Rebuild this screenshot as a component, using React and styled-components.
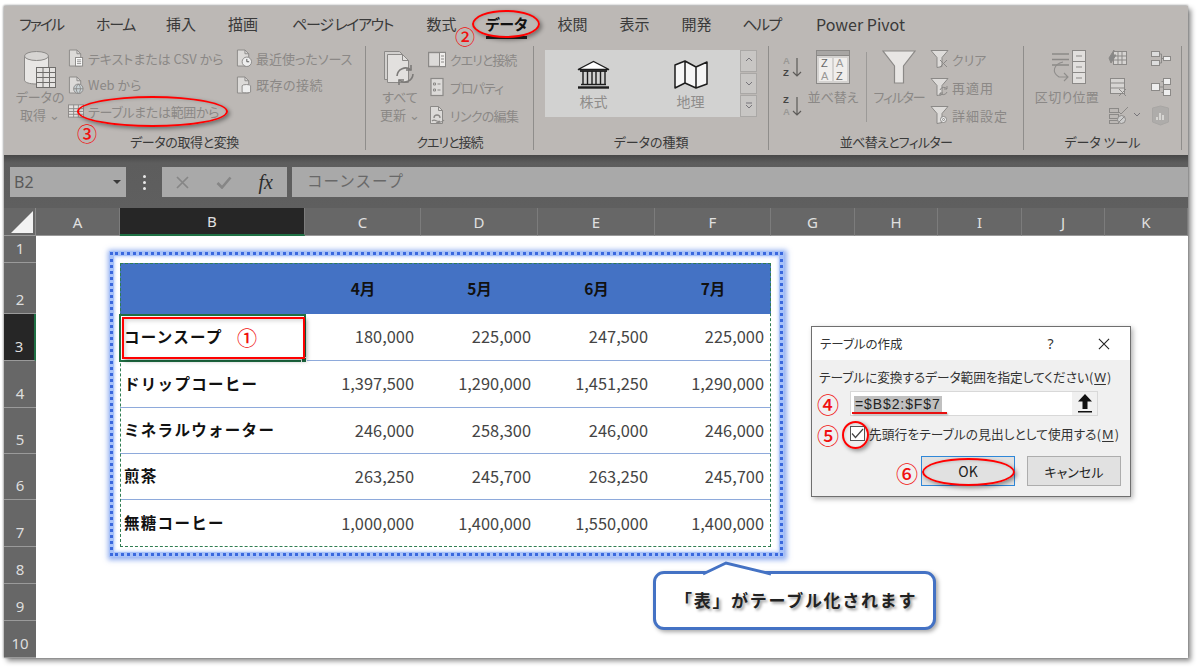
import React from 'react';
import styled, { createGlobalStyle } from 'styled-components';

const JP = '"Noto Sans CJK JP", "Noto Sans", sans-serif';
const LINE = '#8b8987';

const Global = createGlobalStyle`
  html, body { margin: 0; padding: 0; background: #fff; }
  body { font-family: ${JP}; font-feature-settings: "palt"; overflow: hidden; }
`;

const Root = styled.div`
  position: relative;
  width: 1200px;
  height: 669px;
  padding: 6px 0 0 4px;
  box-sizing: border-box;
  overflow: hidden;
`;
const Win = styled.div`
  width: 1184px;
  height: 652px;
  display: flex;
  flex-direction: column;
  background: #fff;
  box-shadow: 3px 3px 5px rgba(0,0,0,.45), 0 -1px 2px rgba(0,0,0,.25), -1px 0 2px rgba(0,0,0,.2);
`;
const Ribbon = styled.div`
  height: 149px;
  background: #bcb8b5;
  display: flex;
  flex-direction: column;
`;
const Tabs = styled.div`
  height: 40px;
  display: flex;
  padding-left: 15px;
  align-items: center;
`;
const Tab = styled.div`
  width: ${p => p.$w}px;
  margin-right: ${p => p.$gap}px;
  display: flex;
  justify-content: center;
  flex: none;
  font-size: ${p => p.$fs || 15}px;
  letter-spacing: ${p => p.$ls || 0}px;
  line-height: 34px;
  height: 38px;
  white-space: nowrap;
  color: ${p => (p.$on ? '#111' : '#3a3a3a')};
  font-weight: ${p => (p.$on ? 700 : 400)};
  box-sizing: border-box;
  position: relative;
  &::after {
    content: '';
    display: ${p => (p.$on ? 'block' : 'none')};
    position: absolute;
    left: 0; right: 0; bottom: 6px;
    height: 3px;
    background: #222;
  }
`;
const Groups = styled.div`
  display: flex;
  height: 104px;
`;
const Group = styled.div`
  width: ${p => p.$w}px;
  box-sizing: border-box;
  border-right: ${p => (p.$end ? 'none' : '1px solid #8f8d8b')};
  display: flex;
  flex-direction: column;
`;
const Content = styled.div`
  height: 88px;
  display: flex;
  padding-left: ${p => p.$pl || 0}px;
`;
const GroupLabel = styled.div`
  height: 16px;
  line-height: 16px;
  font-size: 13px;
  letter-spacing: ${p => p.$ls || 0}px;
  text-align: center;
  color: #3a3a3a;
`;
const Large = styled.div`
  width: ${p => p.$w}px;
  padding-top: 4px;
  display: flex;
  flex-direction: column;
  align-items: center;
  flex: none;
`;
const LargeIcon = styled.div`
  height: 38px;
  display: flex;
  align-items: flex-start;
  justify-content: center;
`;
const LargeText = styled.div`
  font-size: 13px;
  letter-spacing: ${p => p.$ls || 0}px;
  line-height: 18px;
  color: #8b8886;
  text-align: center;
  white-space: nowrap;
`;
const SmallCol = styled.div`
  width: ${p => p.$w}px;
  margin-left: ${p => p.$ml || 0}px;
  flex: none;
  display: flex;
  flex-direction: column;
`;
const SmallRow = styled.div`
  height: ${p => p.$h || 26.5}px;
  display: flex;
  align-items: center;
  box-sizing: border-box;
  padding-bottom: 2px;
  gap: ${p => p.$gap ?? 4}px;
  font-size: 13px;
  letter-spacing: ${p => p.$ls || 0}px;
  color: #8b8886;
  white-space: nowrap;
`;
const IconSlot = styled.span`
  width: ${p => p.$w || 16}px;
  display: flex;
  justify-content: center;
  flex: none;
`;
const Gallery = styled.div`
  margin: 4px 0 0 11px;
  width: 212px;
  height: 67px;
  display: flex;
  background: #d2d2d1;
  box-sizing: border-box;
`;
const GalleryItem = styled.div`
  width: ${p => p.$w}px;
  display: flex;
  flex-direction: column;
  align-items: center;
  gap: 2px;
  padding-top: 10px;
  box-sizing: border-box;
  font-size: 14px;
  line-height: 20px;
  color: #8f8d8b;
`;
const GalleryMain = styled.div`
  flex: 1;
  display: flex;
`;
const Scroller = styled.div`
  width: 17px;
  display: flex;
  flex-direction: column;
  background: #bcb8b5;
  gap: 1px;
  box-sizing: border-box;
`;
const ScrollBtn = styled.div`
  flex: 1;
  background: #c8c6c4;
  border: 1px solid #aaa8a6;
  display: flex;
  align-items: center;
  justify-content: center;
`;
const InnerSep = styled.div`
  width: 1px;
  height: 70px;
  margin: 6px 15px 0 16px;
  background: #9c9a98;
  flex: none;
`;
const FormulaBar = styled.div`
  height: 53px;
  flex: none;
  background: linear-gradient(#474747 0, #5d5d5d 8px, #5f5f5f 100%);
  display: flex;
  padding: 12px 0 11px 6px;
  box-sizing: border-box;
`;
const NameBox = styled.div`
  width: 116px;
  background: #a9a9a9;
  color: #5a5a5a;
  font-family: "Noto Sans", sans-serif;
  font-size: 16px;
  line-height: 30px;
  padding-left: 4px;
  box-sizing: border-box;
  display: flex;
  justify-content: space-between;
  align-items: center;
  padding-right: 5px;
`;
const Caret = styled.span`
  width: 0;
  height: 0;
  border-left: 4px solid transparent;
  border-right: 4px solid transparent;
  border-top: 4px solid #3a3a3a;
`;
const Dots = styled.div`
  width: 36px;
  display: flex;
  flex-direction: column;
  align-items: center;
  justify-content: center;
  gap: 3px;
  span { width: 3px; height: 3px; background: #e8e8e8; border-radius: 50%; }
`;
const FxBox = styled.div`
  width: 125px;
  background: #a9a9a9;
  display: flex;
  align-items: center;
  justify-content: space-between;
  padding: 0 14px 0 14px;
  box-sizing: border-box;
`;
const Fx = styled.span`
  font-family: "Liberation Serif", serif;
  font-style: italic;
  font-size: 20px;
  color: #2c2c2c;
`;
const FormulaText = styled.div`
  flex: 1;
  margin-left: 5px;
  background: #a9a9a9;
  color: #686868;
  font-size: 15.5px;
  line-height: 27px;
  padding-left: 15px;
  letter-spacing: 1px;
  font-feature-settings: normal;
`;
const Sheet = styled.div`
  flex: 1;
  display: grid;
  grid-template-columns: 32px 84px 185px 116px 117px 117px 116px 84px 83px 84px 83px 83px;
  grid-template-rows: 28px 27px 51px 47px 47px 46px 46px 47px 37px 37px 37px;
`;
const Corner = styled.div`
  background: #676767;
  border-right: 1px solid #8a8a8a;
  border-bottom: 1px solid #999;
  box-sizing: border-box;
  position: relative;
  &::after {
    content: '';
    position: absolute;
    right: 2px;
    bottom: 2px;
    border-style: solid;
    border-width: 0 0 22px 22px;
    border-color: transparent transparent #f2f2f2 transparent;
  }
`;
const ColHead = styled.div`
  background: ${p => (p.$on ? '#262626' : '#676767')};
  color: #e0e0e0;
  font-family: "Noto Sans", sans-serif;
  font-size: 15px;
  display: flex;
  align-items: center;
  justify-content: center;
  box-sizing: border-box;
  border-right: 1px solid #7c7c7c;
  border-bottom: ${p => (p.$on ? '2px solid #1f7145' : '1px solid #999')};
`;
const RowHead = styled.div`
  background: ${p => (p.$on ? '#262626' : '#676767')};
  color: #dedede;
  font-family: "Noto Sans", sans-serif;
  font-size: 15px;
  line-height: 20px;
  display: flex;
  align-items: flex-end;
  justify-content: center;
  padding-bottom: 4px;
  box-sizing: border-box;
  border-bottom: 1px solid #9a9a9a;
  border-right: ${p => (p.$on ? '2px solid #1f7145' : 'none')};
`;
const Cell = styled.div`
  background: ${p => (p.$blue ? '#4472c4' : '#fff')};
  display: flex;
  align-items: center;
  box-sizing: border-box;
  white-space: nowrap;
  font-size: 16.4px;
  color: #444;
  padding-bottom: 2px;
  border-bottom: ${p => (p.$line ? '1px solid #8eaadb' : 'none')};
`;
const Name = styled(Cell)`
  color: #111;
  font-weight: 700;
  font-size: 15.5px;
  padding-left: 4px;
  padding-bottom: 3px;
  letter-spacing: 1.3px;
  font-feature-settings: normal;
`;
const Num = styled(Cell)`
  justify-content: flex-end;
  padding-right: 7px;
  font-feature-settings: normal;
`;
const Month = styled(Cell)`
  justify-content: center;
  color: #111;
  font-weight: 700;
  font-size: 15.5px;
  font-feature-settings: normal;
`;
const Marquee = styled.div`
  position: absolute;
  left: 109px;
  top: 251px;
  width: 675px;
  height: 306px;
  box-sizing: border-box;
  border: 5px solid #a8c2f9;
  box-shadow: 1px 1px 5px 2px rgba(120,155,235,.8), inset 0 0 3px 1px #c4d5fb;
  &::after {
    content: '';
    position: absolute;
    inset: -4px;
    border: 3px dotted #3a68de;
  }
`;
const Dashed = styled.div`
  position: absolute;
  left: 120px;
  top: 263px;
  width: 651px;
  height: 284px;
  box-sizing: border-box;
  border: 1px dashed #2f7d52;
`;
const Active = styled.div`
  position: absolute;
  left: 119px;
  top: 314px;
  width: 187px;
  height: 48px;
  box-sizing: border-box;
  border: 2px solid #1f7145;
  &::after {
    content: '';
    position: absolute;
    right: -3px;
    bottom: -3px;
    width: 6px;
    height: 6px;
    background: #1f7145;
    border: 1px solid #fff;
    box-sizing: border-box;
  }
`;
const RedBox = styled.div`
  position: absolute;
  left: 122px;
  top: 317px;
  width: 183px;
  height: 42px;
  box-sizing: border-box;
  border: 2.5px solid #f00;
  box-shadow: 2px 2px 4px rgba(0,0,0,.35), inset 2px 2px 4px rgba(0,0,0,.15);
`;
const Ring = styled.div`
  position: absolute;
  left: ${p => p.$x}px;
  top: ${p => p.$y}px;
  width: ${p => p.$w}px;
  height: ${p => p.$h}px;
  box-sizing: border-box;
  border: 2.5px solid #f00;
  border-radius: 50%;
  box-shadow: 2px 2px 4px rgba(0,0,0,.4), inset 1px 1px 3px rgba(0,0,0,.12);
`;
const Mark = styled.div`
  position: absolute;
  left: ${p => p.$x}px;
  top: ${p => p.$y}px;
  width: 26px;
  height: 26px;
  margin: -13px 0 0 -13px;
  text-align: center;
  line-height: 26px;
  font-size: ${p => p.$s || 20}px;
  font-weight: 500;
  color: #f01010;
  font-feature-settings: normal;
`;
const Dialog = styled.div`
  position: absolute;
  left: 811px;
  top: 326px;
  width: 320px;
  height: 171px;
  box-sizing: border-box;
  border: 1.5px solid #6f6f6f;
  background: #f0f0f0;
  box-shadow: 2px 2px 5px rgba(0,0,0,.3);
  display: flex;
  flex-direction: column;
`;
const DialogTitle = styled.div`
  height: 33px;
  flex: none;
  background: #fff;
  display: flex;
  align-items: center;
  font-size: 12.5px;
  color: #333;
  padding-left: 8px;
`;
const TitleText = styled.span`
  flex: 1;
`;
const TitleBtn = styled.span`
  width: 53px;
  display: flex;
  justify-content: center;
  font-family: "Noto Sans", sans-serif;
  font-size: 14px;
`;
const DialogBody = styled.div`
  padding: 7px 8px 0 7px;
  display: flex;
  flex-direction: column;
  font-size: 12.7px;
  color: #333;
  flex: 1;
`;
const Prompt = styled.div`
  line-height: 20px;
  white-space: nowrap;
  letter-spacing: -.05px;
`;
const Key = styled.u`
  font-family: "Noto Sans", sans-serif;
  text-underline-offset: 2px;
  margin: 0 1px;
`;
const InputRow = styled.div`
  margin: 4px 0 0 31px;
  width: 248px;
  height: 25px;
  background: #fff;
  border: 1px solid #d8d8d8;
  box-sizing: border-box;
  display: flex;
  align-items: center;
  padding-left: 3px;
`;
const Selected = styled.span`
  flex: 1;
`;
const Range = styled.span`
  background: #c0c0c0;
  font-family: "Liberation Sans", sans-serif;
  font-size: 14px;
  line-height: 16px;
  letter-spacing: .9px;
  color: #222;
  padding: 0 1px;
`;
const UpBtn = styled.div`
  width: 25px;
  height: 23px;
  background: #f0f0f0;
  display: flex;
  align-items: center;
  justify-content: center;
`;
const CheckRow = styled.div`
  margin: 9px 0 0 31px;
  display: flex;
  align-items: center;
  gap: 4px;
  height: 16px;
  white-space: nowrap;
  letter-spacing: .1px;
`;
const CheckLabel = styled.span``;
const CheckBox = styled.div`
  width: 15px;
  height: 15px;
  border: 1px solid #555;
  background: #fff;
  box-sizing: border-box;
  display: flex;
  align-items: center;
  justify-content: center;
  flex: none;
`;
const Buttons = styled.div`
  margin: 15px 0 0 102px;
  display: flex;
  gap: 12px;
`;
const DlgButton = styled.div`
  width: 94px;
  height: 30px;
  box-sizing: border-box;
  background: #e1e1e1;
  border: 1px solid ${p => (p.$primary ? '#2f87d8' : '#adadad')};
  display: flex;
  align-items: center;
  justify-content: center;
  font-size: ${p => (p.$primary ? 14 : 13)}px;
  color: #222;
`;
const Callout = styled.div`
  position: absolute;
  left: 653px;
  top: 571px;
  width: 283px;
  height: 59px;
  box-sizing: border-box;
  background: #fff;
  border: 3px solid #4472c4;
  border-radius: 11px;
  box-shadow: 2px 2px 4px rgba(0,0,0,.35);
  display: flex;
  align-items: center;
  padding: 0 0 3px 19px;
  font-size: 17px;
  font-weight: 700;
  color: #222;
  letter-spacing: 1.7px;
  font-feature-settings: normal;
  text-shadow: 2px 2px 3px rgba(0,0,0,.4);
`;
const CalloutTip = styled.svg`
  position: absolute;
  left: 46px;
  top: -12px;
  overflow: visible;
`;
const RedLine = styled.div`
  position: absolute;
  left: 852px;
  top: 412px;
  width: 95px;
  height: 2px;
  background: #e81010;
  box-shadow: 1px 1px 2px rgba(0,0,0,.3);
`;

/* ---------- icons ---------- */
const S = ({ w, h, children }) => (
  <svg width={w} height={h} viewBox={`0 0 ${w} ${h}`} fill="none" stroke={LINE} strokeWidth="1">{children}</svg>
);
const Doc = ({ children }) => (
  <S w={17} h={20}>
    <path d="M1.5 1.5h8l4 4v13h-12z" fill="#dcdad8" />
    <path d="M9.5 1.5v4h4" />
    {children}
  </S>
);
const DocText = () => (<Doc><rect x="8" y="9.5" width="7.5" height="9" fill="#fff" /><path d="M9.5 12h4.5M9.5 14h4.5M9.5 16h4.5" /></Doc>);
const DocWeb = () => (<Doc><circle cx="11" cy="14" r="5" fill="#c9d3d6" /><path d="M6 14h10M11 9c-3 3-3 7 0 10M11 9c3 3 3 7 0 10" /></Doc>);
const DocClock = () => (<Doc><circle cx="11.5" cy="14" r="5" fill="#eee" /><path d="M11.5 11v3h2.5" stroke="#555" /></Doc>);
const DocBase = () => (<Doc><ellipse cx="11" cy="11" rx="4.5" ry="1.5" fill="#eee" /><path d="M6.5 11v6.5c0 1 9 1 9 0V11" fill="#eee" /></Doc>);
const TableIco = () => (
  <S w={17} h={16}>
    <rect x=".5" y="1.5" width="16" height="13" fill="#e4e2e0" />
    <path d="M.5 5.5h16M.5 8.5h16M.5 11.5h16M6 1.5v13M11 1.5v13" />
  </S>
);
const Db = () => (
  <S w={34} h={38}>
    <path d="M1.5 6v24c0 2.5 5 4 12 4s12-1.5 12-4V6" fill="#e8e6e4" />
    <ellipse cx="13.5" cy="6" rx="12" ry="4.5" fill="#d6d4d2" />
    <rect x="13.5" y="17.5" width="19" height="20" fill="#e4e2e0" stroke="#6f6d6b" />
    <path d="M13.5 22.5h19M13.5 27.5h19M13.5 32.5h19M20 17.5v20M26.5 17.5v20" stroke="#6f6d6b" />
  </S>
);
const Refresh = () => (
  <S w={34} h={37}>
    <path d="M1.5 1.5h15l6 6v22h-21z" fill="#d2d0ce" />
    <path d="M4.5 4.5h15l6 6v22h-21z" fill="#e2e0de" />
    <path d="M19.5 4.5v6h6" />
    <path d="M14 26a8.5 8.5 0 0 1 14-6M30 24a8.5 8.5 0 0 1-14 6" strokeWidth="1.6" stroke="#7c7a78" />
    <path d="M28 15v5h-5M16 35v-5h5" strokeWidth="1.6" stroke="#7c7a78" />
  </S>
);
const QueryIco = () => (
  <S w={18} h={18}>
    <rect x=".5" y="2.5" width="17" height="14" fill="#dcdad8" strokeWidth="1.4" />
    <rect x="11.5" y="2.5" width="6" height="14" fill="#efedeb" />
    <path d="M13 6h3M13 9h3M13 12h3" />
  </S>
);
const PropIco = () => (
  <S w={14} h={20}>
    <rect x="1" y="1.5" width="12" height="17" fill="#dcdad8" strokeWidth="1.2" />
    <path d="M3.5 6h2v2h-2zM3.5 12h2v2h-2zM7.5 7h3M7.5 13h3" />
  </S>
);
const LinkIco = () => (
  <S w={17} h={20}>
    <path d="M1.5 1.5h8l4 4v13h-12z" fill="#dcdad8" />
    <path d="M9.5 1.5v4h4" />
    <path d="M5 13a3 3 0 0 1 6 0M3 16c3-3 5 2 8 0M7 18c3-1 6 0 8-3" strokeWidth="1.3" />
  </S>
);
const Bank = () => (
  <svg width="33" height="29" viewBox="0 0 33 29" fill="none" stroke="#1d1d1d" strokeWidth="1.4">
    <path d="M1 9.5 16.5 1.5 32 9.5z" fill="#fff" />
    <path d="M3 11h27" strokeWidth="1.8" />
    <path d="M6 11v13M10.5 11v13M15 11v13M19 11v13M23.5 11v13M28 11v13" />
    <path d="M4 24.5h25" />
    <path d="M1 27.5h31" strokeWidth="2.4" />
  </svg>
);
const MapIco = () => (
  <svg width="34" height="29" viewBox="0 0 34 29" fill="#f6f6f6" stroke="#1d1d1d" strokeWidth="1.5" strokeLinejoin="round">
    <path d="M1 5 11 1v22L1 28zM11 1l11 6v21l-11-5zM22 7l11-5v22l-11 4z" />
  </svg>
);
const Chev = ({ d = 'M2 4l3-3 3 3' }) => (
  <svg width="10" height="8" viewBox="0 0 10 8" fill="none" stroke="#77757a" strokeWidth="1"><path d={d} /></svg>
);
const SortAZ = ({ flip }) => (
  <svg width="21" height="24" viewBox="0 0 21 24" fill="none">
    <text x="0" y="9" fontSize="9.5" fontFamily="Liberation Sans" fill={flip ? '#444' : '#9a9896'} fontWeight="700">{flip ? 'Z' : 'A'}</text>
    <text x="0" y="21" fontSize="9.5" fontFamily="Liberation Sans" fill={flip ? '#9a9896' : '#444'} fontWeight="700">{flip ? 'A' : 'Z'}</text>
    <path d="M14 3v18M10 17l4 4 4-4" stroke="#5d5b59" strokeWidth="1.2" />
  </svg>
);
const SortBig = () => (
  <svg width="34" height="34" viewBox="0 0 34 34" fill="none" stroke={LINE}>
    <rect x=".5" y=".5" width="33" height="33" fill="#d4d2d0" />
    <rect x=".5" y=".5" width="33" height="5" fill="#a8a6a4" />
    <rect x="3" y="8" width="13" height="23" fill="#f0eeec" stroke="none" />
    <rect x="18" y="8" width="13" height="23" fill="#f0eeec" stroke="none" />
    <g stroke="none" fontFamily="Liberation Sans" fontSize="11">
      <text x="5" y="17" fill="#666">Z</text>
      <text x="20" y="17" fill="#9a9896">A</text>
      <text x="5" y="30" fill="#9a9896">A</text>
      <text x="20" y="30" fill="#666">Z</text>
    </g>
  </svg>
);
const Funnel = () => (
  <svg width="34" height="34" viewBox="0 0 34 34" fill="#e8e6e4" stroke={LINE} strokeWidth="1.2">
    <path d="M1 1h32L21.5 16v17h-9V16z" />
  </svg>
);
const Funnel2 = ({ kind }) => (
  <S w={19} h={20}>
    <path d="M1 1.5h17l-6 7v9l-5 1v-10z" fill="#dedcda" />
    {kind === 'x' && <path d="M10 11l7 7M17 11l-7 7" />}
    {kind === 'r' && <path d="M10 13a4 4 0 0 1 7-1M17 15a4 4 0 0 1-7 1M17 9v3h-3M10 19v-3h3" />}
    {kind === 'g' && <g><circle cx="13.5" cy="14.5" r="3" fill="#eee" /><circle cx="13.5" cy="14.5" r="1" /></g>}
  </S>
);
const Split = () => (
  <svg width="37" height="34" viewBox="0 0 37 34" fill="none" stroke={LINE}>
    <path d="M3 4h17M3 9.5h17M3 15h17" strokeWidth="1.3" />
    <rect x="23.5" y=".5" width="13" height="33" fill="#e2e0de" />
    <path d="M23.5 11.5h13M23.5 22.5h13M27 6h6M27 17h6M27 28h6" />
    <path d="M14 12c-9 2-12 10-4 15h9M15 23l4 4-4 4" stroke="#8f8d8b" strokeWidth="1.1" />
  </svg>
);
const TOOLS = {
  flash: (<g><rect x="5.5" y="2.5" width="13" height="13" fill="#d6d4d2" /><path d="M5.5 7h13M5.5 11h13M10 2.5v13M14 2.5v13" /><path d="M1 9l5-8-1 5 3 0-5 8z" fill="#888" /></g>),
  dup: (<g><rect x="2.5" y="1.5" width="14" height="15" fill="#d6d4d2" /><path d="M2.5 6h14M2.5 11h14" /><path d="M11 12l7 7M18 12l-7 7" /></g>),
  val: (<g><rect x="1.5" y="3.5" width="9" height="4" /><rect x="1.5" y="9.5" width="9" height="4" /><rect x="1.5" y="15.5" width="9" height="3" /><path d="M10 6l3 3 7-7" /><circle cx="13.5" cy="14.5" r="4" fill="#ccc" /><path d="M10.5 17.5l6-6" /></g>),
  cons: (<g><rect x="1.5" y="2.5" width="8" height="5" fill="#ddd" /><rect x="1.5" y="11.5" width="8" height="5" fill="#ddd" /><path d="M9.5 5h2v9h-2M11.5 9.5h2" /><rect x="13.5" y="7.5" width="7" height="4" fill="#eee" /></g>),
  rel: (<g><rect x="1.5" y="6.5" width="8" height="7" fill="#eee" /><rect x="13.5" y="1.5" width="7" height="6" fill="#eee" /><rect x="13.5" y="12.5" width="7" height="6" fill="#eee" /><path d="M9.5 10h4M11.5 4.5h2v11h-2" /></g>),
  cube: (<g stroke="#a8a6a4"><path d="M2.5 3l8-2 8 2v14l-8 3-8-3z" fill="#aeacaa" /><path d="M10 8v7M13 10v5M7 12v3" stroke="#e4e2e0" strokeWidth="1.5" /></g>),
};
const Tool = ({ k }) => (
  <svg width="22" height="21" viewBox="0 0 22 21" fill="none" stroke={LINE}>{TOOLS[k]}</svg>
);
const Cross = ({ s = 13, c = '#868686', w = 1.7 }) => (
  <svg width={s} height={s} viewBox="0 0 13 13" fill="none" stroke={c} strokeWidth={w}><path d="M1 1l11 11M12 1 1 12" /></svg>
);
const Tick = () => (
  <svg width="16" height="13" viewBox="0 0 16 13" fill="none" stroke="#868686" strokeWidth="2.6"><path d="M1.5 7l4.5 4.5L14.5 1.5" /></svg>
);
const Up = () => (
  <svg width="16" height="19" viewBox="0 0 16 19" fill="#111"><path d="M8 0 15 7.5H10.5V15h-5V7.5H1zM1 17h14v1.5H1z" /></svg>
);
const SmallTick = () => (
  <svg width="13" height="11" viewBox="0 0 13 11" fill="none" stroke="#444" strokeWidth="1.2"><path d="M1 5.5 4.5 9.5 12 1" /></svg>
);

/* ---------- data ---------- */
const TABS = [
  { t: 'ファイル', w: 44, gap: 33, ls: -2 },
  { t: 'ホーム', w: 39, gap: 31, ls: -1.3 },
  { t: '挿入', w: 30, gap: 32 },
  { t: '描画', w: 30, gap: 34 },
  { t: 'ページ レイアウト', w: 101, gap: 33, ls: -1.4 },
  { t: '数式', w: 31, gap: 29 },
  { t: 'データ', w: 41, gap: 30 },
  { t: '校閲', w: 31, gap: 31 },
  { t: '表示', w: 31, gap: 31 },
  { t: '開発', w: 31, gap: 31 },
  { t: 'ヘルプ', w: 37, gap: 36, ls: -1.6 },
  { t: 'Power Pivot', w: 89, gap: 0, fs: 16 },
];
const COLS = ['A', 'B', 'C', 'D', 'E', 'F', 'G', 'H', 'I', 'J', 'K'];
const MONTHS = ['4月', '5月', '6月', '7月'];
const DATA = [
  ['コーンスープ', '180,000', '225,000', '247,500', '225,000'],
  ['ドリップコーヒー', '1,397,500', '1,290,000', '1,451,250', '1,290,000'],
  ['ミネラルウォーター', '246,000', '258,300', '246,000', '246,000'],
  ['煎茶', '263,250', '245,700', '263,250', '245,700'],
  ['無糖コーヒー', '1,000,000', '1,400,000', '1,550,000', '1,400,000'],
];

const renderCell = (r, c) => {
  const key = `${r}${c}`;
  const inTable = c >= 1 && c <= 5;
  if (r === 2 && inTable) {
    return c === 1 ? <Cell key={key} $blue /> : <Month key={key} $blue>{MONTHS[c - 2]}</Month>;
  }
  if (r >= 3 && r <= 7 && inTable) {
    const row = DATA[r - 3];
    const line = r < 7;
    return c === 1
      ? <Name key={key} $line={line}>{row[0]}</Name>
      : <Num key={key} $line={line}>{row[c - 1]}</Num>;
  }
  return <Cell key={key} />;
};

export default function App() {
  return (
    <Root>
      <Global />
      <Win>
        <Ribbon>
          <Tabs>
            {TABS.map(({ t, w, gap, ls, fs }) => (
              <Tab key={t} $w={w} $gap={gap} $ls={ls} $fs={fs} $on={t === 'データ'}>{t}</Tab>
            ))}
          </Tabs>
          <Groups>
            <Group $w={362}>
              <Content $pl={8}>
                <Large $w={56}>
                  <LargeIcon><Db /></LargeIcon>
                  <LargeText>データの<br />取得 ⌄</LargeText>
                </Large>
                <SmallCol $w={168}>
                  <SmallRow><IconSlot><DocText /></IconSlot>テキストまたは CSV から</SmallRow>
                  <SmallRow><IconSlot><DocWeb /></IconSlot>Web から</SmallRow>
                  <SmallRow $ls={-0.3}><IconSlot><TableIco /></IconSlot>テーブルまたは範囲から</SmallRow>
                </SmallCol>
                <SmallCol $w={120}>
                  <SmallRow><IconSlot><DocClock /></IconSlot>最近使ったソース</SmallRow>
                  <SmallRow $ls={0.5}><IconSlot><DocBase /></IconSlot>既存の接続</SmallRow>
                </SmallCol>
              </Content>
              <GroupLabel $ls={-0.4}>データの取得と変換</GroupLabel>
            </Group>
            <Group $w={168}>
              <Content $pl={6}>
                <Large $w={56}>
                  <LargeIcon><Refresh /></LargeIcon>
                  <LargeText>すべて<br />更新 ⌄</LargeText>
                </Large>
                <SmallCol $w={100}>
                  <SmallRow $h={28} $ls={-1}><IconSlot $w={18}><QueryIco /></IconSlot>クエリと接続</SmallRow>
                  <SmallRow $h={28} $ls={-1}><IconSlot $w={18}><PropIco /></IconSlot>プロパティ</SmallRow>
                  <SmallRow $h={28} $ls={-0.7}><IconSlot $w={18}><LinkIco /></IconSlot>リンクの編集</SmallRow>
                </SmallCol>
              </Content>
              <GroupLabel $ls={-1}>クエリと接続</GroupLabel>
            </Group>
            <Group $w={235}>
              <Content>
                <Gallery>
                  <GalleryMain>
                    <GalleryItem $w={97}><Bank />株式</GalleryItem>
                    <GalleryItem $w={97}><MapIco />地理</GalleryItem>
                  </GalleryMain>
                  <Scroller>
                    <ScrollBtn><Chev /></ScrollBtn>
                    <ScrollBtn><Chev d="M2 2l3 3 3-3" /></ScrollBtn>
                    <ScrollBtn><Chev d="M2 1h6M2 3l3 3 3-3" /></ScrollBtn>
                  </Scroller>
                </Gallery>
              </Content>
              <GroupLabel>データの種類</GroupLabel>
            </Group>
            <Group $w={255}>
              <Content $pl={14}>
                <SmallCol $w={33}>
                  <SmallRow $h={43}><SortAZ /></SmallRow>
                  <SmallRow $h={35}><SortAZ flip /></SmallRow>
                </SmallCol>
                <Large $w={34}>
                  <LargeIcon><SortBig /></LargeIcon>
                  <LargeText>並べ替え</LargeText>
                </Large>
                <InnerSep />
                <Large $w={34}>
                  <LargeIcon><Funnel /></LargeIcon>
                  <LargeText $ls={-1.2}>フィルター</LargeText>
                </Large>
                <SmallCol $w={80} $ml={14}>
                  <SmallRow $h={28} $gap={3}><IconSlot $w={19}><Funnel2 kind="x" /></IconSlot>クリア</SmallRow>
                  <SmallRow $h={28} $gap={3} $ls={1}><IconSlot $w={19}><Funnel2 kind="r" /></IconSlot>再適用</SmallRow>
                  <SmallRow $h={28} $gap={3} $ls={1}><IconSlot $w={19}><Funnel2 kind="g" /></IconSlot>詳細設定</SmallRow>
                </SmallCol>
              </Content>
              <GroupLabel $ls={-0.7}>並べ替えとフィルター</GroupLabel>
            </Group>
            <Group $w={158}>
              <Content $pl={10}>
                <Large $w={66}>
                  <LargeIcon><Split /></LargeIcon>
                  <LargeText $ls={0.3}>区切り位置</LargeText>
                </Large>
                <SmallCol $w={42} $ml={8}>
                  <SmallRow $h={28}><Tool k="flash" /></SmallRow>
                  <SmallRow $h={28}><Tool k="dup" /></SmallRow>
                  <SmallRow $h={28} $gap={2}><Tool k="val" /><Chev d="M2 2l3 3 3-3" /></SmallRow>
                </SmallCol>
                <SmallCol $w={30}>
                  <SmallRow $h={28}><Tool k="cons" /></SmallRow>
                  <SmallRow $h={28}><Tool k="rel" /></SmallRow>
                  <SmallRow $h={28}><Tool k="cube" /></SmallRow>
                </SmallCol>
              </Content>
              <GroupLabel>データ ツール</GroupLabel>
            </Group>
          </Groups>
        </Ribbon>
        <FormulaBar>
          <NameBox>B2<Caret /></NameBox>
          <Dots><span /><span /><span /></Dots>
          <FxBox><Cross /><Tick /><Fx>fx</Fx></FxBox>
          <FormulaText>コーンスープ</FormulaText>
        </FormulaBar>
        <Sheet>
          <Corner />
          {COLS.map(c => <ColHead key={c} $on={c === 'B'}>{c}</ColHead>)}
          {Array.from({ length: 10 }, (_, i) => i + 1).map(r => (
            <React.Fragment key={r}>
              <RowHead $on={r === 3}>{r}</RowHead>
              {COLS.map((_, ci) => renderCell(r, ci))}
            </React.Fragment>
          ))}
        </Sheet>
      </Win>

      <Marquee />
      <Dashed />
      <Active />
      <RedBox />
      <Ring $x={472} $y={10} $w={68} $h={28} />
      <Ring $x={77} $y={96} $w={151} $h={31} />
      <Mark $x={465} $y={37}>②</Mark>
      <Mark $x={87} $y={134}>③</Mark>
      <Mark $x={247} $y={338}>①</Mark>

      <Dialog>
        <DialogTitle>
          <TitleText>テーブルの作成</TitleText>
          <TitleBtn>?</TitleBtn>
          <TitleBtn><Cross s={12} c="#222" w={1.2} /></TitleBtn>
        </DialogTitle>
        <DialogBody>
          <Prompt>テーブルに変換するデータ範囲を指定してください(<Key>W</Key>)</Prompt>
          <InputRow>
            <Selected><Range>=$B$2:$F$7</Range></Selected>
            <UpBtn><Up /></UpBtn>
          </InputRow>
          <CheckRow>
            <CheckBox><SmallTick /></CheckBox>
            <CheckLabel>先頭行をテーブルの見出しとして使用する(<Key>M</Key>)</CheckLabel>
          </CheckRow>
          <Buttons>
            <DlgButton $primary>OK</DlgButton>
            <DlgButton>キャンセル</DlgButton>
          </Buttons>
        </DialogBody>
      </Dialog>
      <RedLine />
      <Ring $x={842} $y={421} $w={27} $h={28} />
      <Ring $x={922} $y={458} $w={93} $h={28} />
      <Mark $x={828} $y={403} $s={22}>④</Mark>
      <Mark $x={828} $y={434} $s={22}>⑤</Mark>
      <Mark $x={907} $y={472} $s={22}>⑥</Mark>

      <Callout>
        <CalloutTip width="70" height="12" viewBox="0 0 70 12">
          <path d="M1 12 24 1 69 12" fill="#fff" stroke="#4472c4" strokeWidth="3" />
        </CalloutTip>
        「表」がテーブル化されます
      </Callout>
    </Root>
  );
}
